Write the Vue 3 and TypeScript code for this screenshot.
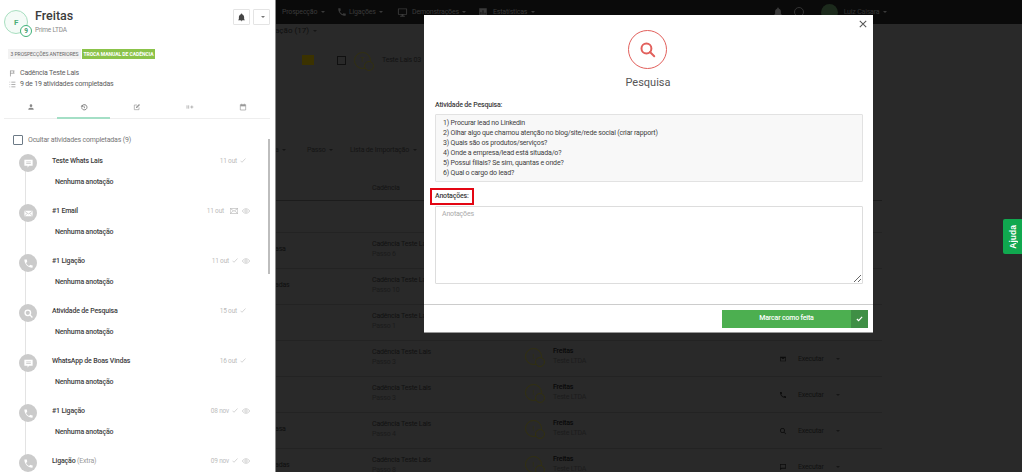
<script setup lang="ts">
type IconName = 'chat' | 'mail' | 'phone' | 'search'

interface Activity {
  title: string
  extra?: string
  date: string
  icon: IconName
  done: boolean
  mailed?: boolean
  seen?: boolean
}

const activities: Activity[] = [
  { title: 'Teste Whats Lais', date: '11 out', icon: 'chat', done: true },
  { title: '#1 Email', date: '11 out', icon: 'mail', done: false, mailed: true, seen: true },
  { title: '#1 Ligação', date: '11 out', icon: 'phone', done: true, seen: true },
  { title: 'Atividade de Pesquisa', date: '15 out', icon: 'search', done: true },
  { title: 'WhatsApp de Boas Vindas', date: '16 out', icon: 'chat', done: true },
  { title: '#1 Ligação', date: '08 nov', icon: 'phone', done: true, seen: true },
  { title: 'Ligação', extra: '(Extra)', date: '09 nov', icon: 'phone', done: true, seen: true },
]

const phonePath =
  'M6.6 10.8c1.4 2.8 3.8 5.1 6.6 6.6l2.2-2.2c.3-.3.7-.4 1-.2 1.1.4 2.3.6 3.6.6.6 0 1 .4 1 1V20c0 .6-.4 1-1 1C10.6 21 3 13.4 3 4c0-.6.4-1 1-1h3.5c.6 0 1 .4 1 1 0 1.3.2 2.5.6 3.6.1.3 0 .7-.2 1l-2.3 2.2z'

const steps = [
  '1) Procurar lead no Linkedin',
  '2) Olhar algo que chamou atenção no blog/site/rede social (criar rapport)',
  '3) Quais são os produtos/serviços?',
  '4) Onde a empresa/lead está situada/o?',
  '5) Possui filiais? Se sim, quantas e onde?',
  '6) Qual o cargo do lead?',
]

interface Row {
  frag: string
  passo: string
  lead: boolean
  action?: IconName
}

const rows: Row[] = [
  { frag: 'asa', passo: 'Passo 6', lead: false },
  { frag: 'adas', passo: 'Passo 10', lead: false },
  { frag: '', passo: 'Passo 1', lead: false },
  { frag: '', passo: 'Passo 3', lead: true, action: 'mail' },
  { frag: '', passo: 'Passo 3', lead: true, action: 'phone' },
  { frag: 'asa', passo: 'Passo 4', lead: true, action: 'search' },
  { frag: 'adas', passo: 'Passo 8', lead: true, action: 'chat' },
]
</script>

<template>
  <div class="page">
    <!-- dimmed application behind the overlays -->
    <div class="under">
      <nav class="topbar">
        <span class="nav-item first">Prospecção <i class="caret" /></span>
        <svg class="nav-icon" viewBox="0 0 24 24"><path :d="phonePath" /></svg>
        <span class="nav-item second">Ligações <i class="caret" /></span>
        <svg class="nav-icon mon" viewBox="0 0 24 24"><path d="M3 3h18a1 1 0 0 1 1 1v12a1 1 0 0 1-1 1h-7v2h3v2H7v-2h3v-2H3a1 1 0 0 1-1-1V4a1 1 0 0 1 1-1zm1 2v10h16V5z" /></svg>
        <span class="nav-item wide">Demonstrações <i class="caret" /></span>
        <svg class="nav-icon mon2" viewBox="0 0 24 24"><path d="M3 3h18v18H3zm3 9v6h2v-6zm5-4v10h2V8zm5 6v4h2v-4z" /></svg>
        <span class="nav-item">Estatísticas <i class="caret" /></span>
        <span class="nav-right">
          <svg class="nav-icon" viewBox="0 0 24 24"><path d="M12 22a2 2 0 0 0 2-2h-4a2 2 0 0 0 2 2zm7-5v-6c0-3.3-2.1-6-5-6.700V3a2 2 0 0 0-4 0v1.300C7.100 5 5 7.700 5 11v6l-2 1v1h18v-1z" /></svg>
          <span class="help-dot" />
          <span class="user-dot" />
          <span class="nav-item user">Luiz Caisara <i class="caret" /></span>
        </span>
      </nav>

      <div class="title-row">ação (17) <i class="caret dark" /></div>

      <div class="chip-row">
        <span class="yellow" />
        <span class="bg-check" />
        <span class="ring"><b>T</b><em /></span>
        <span class="chip-name">Teste Lais 03</span>
      </div>

      <div class="filter-row">
        <span class="f1">a <i class="caret dark" /></span>
        <span class="f2">Passo <i class="caret dark" /></span>
        <span>Lista de Importação <i class="caret dark" /></span>
      </div>

      <div class="head-row">Cadência</div>
      <div class="blank-row" />

      <div v-for="(r, i) in rows" :key="i" class="row">
        <span class="frag">{{ r.frag }}</span>
        <div class="cad">
          <p>Cadência Teste Lais</p>
          <small>{{ r.passo }}</small>
        </div>
        <div class="lead">
          <template v-if="r.lead">
            <span class="ring"><b>!</b><em /></span>
            <div class="lead-text">
              <p>Freitas</p>
              <small>Teste LTDA</small>
            </div>
          </template>
        </div>
        <div v-if="r.action" class="act">
          <svg class="act-icon" viewBox="0 0 24 24">
            <path v-if="r.action === 'phone'" :d="phonePath" />
            <path v-else-if="r.action === 'mail'" d="M3 5h18v14H3zm2 2.500V17h14V7.500l-7 5z" />
            <path v-else-if="r.action === 'search'" d="M10.500 3a7.500 7.500 0 0 1 5.900 12.100l5 5-1.400 1.400-5-5A7.500 7.500 0 1 1 10.500 3zm0 2.500a5 5 0 1 0 0 10 5 5 0 0 0 0-10z" />
            <path v-else d="M3 3h18v14H8l-5 4zm2 2v11l2.300-1.500H19V5z" />
          </svg>
          <span class="exec">Executar</span>
          <i class="caret dark" />
        </div>
      </div>
    </div>

    <!-- lead drawer -->
    <aside class="drawer">
      <header class="d-head">
        <div class="avatar">
          <span>F</span>
          <em>9</em>
        </div>
        <div class="who">
          <h2>Freitas</h2>
          <small>Prime LTDA</small>
        </div>
        <button class="sq bell" type="button" aria-label="Notificações">
          <svg viewBox="0 0 24 24"><path d="M12 22a2 2 0 0 0 2-2h-4a2 2 0 0 0 2 2zm7-5v-6c0-3.300-2.100-6-5-6.700V3a2 2 0 0 0-4 0v1.300C7.100 5 5 7.700 5 11v6l-2 1v1h18v-1z" /></svg>
        </button>
        <button class="sq" type="button" aria-label="Mais"><i class="caret grey" /></button>
      </header>

      <div class="tags">
        <span class="tag">3 PROSPECÇÕES ANTERIORES</span>
        <span class="tag green">TROCA MANUAL DE CADÊNCIA</span>
      </div>

      <div class="meta-line">
        <svg viewBox="0 0 12 12"><path d="M2.500 1v10M2.500 1.500h6.500l-1.500 2 1.500 2H2.500" /></svg>
        Cadência Teste Lais
      </div>
      <div class="meta-line second-line">
        <svg viewBox="0 0 12 12"><path d="M1 2h1M4 2h7M1 6h1M4 6h7M1 10h1M4 10h7" /></svg>
        9 de 19 atividades completadas
      </div>

      <div class="tabs">
        <span class="tab">
          <svg viewBox="0 0 24 24"><path class="solid" d="M12 4a4 4 0 1 1 0 8 4 4 0 0 1 0-8zM4 20v-2c0-2.700 5.300-4 8-4s8 1.300 8 4v2z" /></svg>
        </span>
        <span class="tab on">
          <svg viewBox="0 0 24 24"><path d="M8 6.500A8 8 0 1 1 5 13M12 8v5l3 2" /><path class="solid" d="M2 10l6-5v7z" /></svg>
        </span>
        <span class="tab">
          <svg viewBox="0 0 24 24"><path d="M18 13v7H4V6h8" /><path class="solid" d="M9 12l9-9 3 3-9 9-3 0z" /></svg>
        </span>
        <span class="tab">
          <svg viewBox="0 0 24 24"><path d="M3 7v10M8 7v10M13 12h9M17.500 7.500v9" /></svg>
        </span>
        <span class="tab">
          <svg viewBox="0 0 24 24"><path d="M4 5h16v16H4zM8 2v5M16 2v5" /><path class="solid" d="M4 5h16v5H4z" /></svg>
        </span>
      </div>

      <div class="scroll">
        <span class="thumb" />
        <label class="hide">
          <span class="box" />
          Ocultar atividades completadas (9)
        </label>

        <ul class="timeline">
          <li v-for="(a, i) in activities" :key="i" class="item">
            <span class="bubble">
              <svg v-if="a.icon === 'phone'" class="ic-fill" viewBox="0 0 24 24"><path :d="phonePath" /></svg>
              <svg v-else-if="a.icon === 'chat'" class="ic-fill" viewBox="0 0 24 24">
                <path d="M3 4h18v13h-8l-3 4v-4H3z" />
                <path class="bub-line" d="M7 8.500h10M7 12h10" />
              </svg>
              <svg v-else-if="a.icon === 'mail'" class="ic-fill" viewBox="0 0 24 24">
                <path d="M3 6h18v12H3z" />
                <path class="bub-line" d="M3.500 7l8.500 6 8.500-6M3.500 17.500l6-6M20.500 17.500l-6-6" />
              </svg>
              <svg v-else class="ic-stroke" viewBox="0 0 24 24"><circle cx="10.500" cy="10.500" r="6" /><path d="M15 15l5.500 5.500" /></svg>
            </span>
            <div class="item-body">
              <div class="item-top">
                <span class="item-title">{{ a.title }} <span v-if="a.extra" class="extra">{{ a.extra }}</span></span>
                <span class="item-meta" :class="{ noeye: !a.seen }">
                  <span class="date">{{ a.date }}</span>
                  <svg v-if="a.mailed" class="m-ic mailed" viewBox="0 0 14 10"><path d="M.5.500h13v9H.500zM.5.500 7 5.500 13.500.500M.5 9.500 5.500 4.500M13.500 9.500 8.500 4.500" /></svg>
                  <svg v-if="a.done" class="m-ic check" viewBox="0 0 12 10"><path d="M1 5.500 4 8.500 11 1" /></svg>
                  <svg v-if="a.seen" class="m-ic eye" viewBox="0 0 16 10"><path d="M.5 5C3 1.500 5.500.5 8 .5s5 1 7.500 4.500C13 8.500 10.500 9.500 8 9.500S3 8.500.5 5z" /><circle cx="8" cy="5" r="2.500" /></svg>
                </span>
              </div>
              <p v-if="i < activities.length - 1" class="note">Nenhuma anotação</p>
            </div>
          </li>
        </ul>
      </div>
    </aside>

    <!-- activity dialog -->
    <section class="modal">
      <button class="close" type="button" aria-label="Fechar">
        <svg viewBox="0 0 10 10"><path d="M1 1l8 8M9 1l-8 8" /></svg>
      </button>
      <div class="m-body">
        <div class="m-circle">
          <svg viewBox="0 0 24 24"><circle cx="10.500" cy="10.500" r="7" /><path d="M15.500 15.500 21.500 21.500" /></svg>
        </div>
        <h3>Pesquisa</h3>
        <p class="lbl first-lbl">Atividade de Pesquisa:</p>
        <div class="steps">
          <p v-for="s in steps" :key="s">{{ s }}</p>
        </div>
        <p class="lbl marked">Anotações:</p>
        <textarea class="notes" placeholder="Anotações" />
      </div>
      <footer class="m-foot">
        <button class="done" type="button">
          <span>Marcar como feita</span>
          <i>
            <svg viewBox="0 0 12 10"><path d="M1.500 5 4.500 8 10.500 1.500" /></svg>
          </i>
        </button>
      </footer>
    </section>

    <button class="ajuda" type="button"><span>Ajuda</span></button>
  </div>
</template>

<style scoped>
.page {
  position: relative;
  width: 1022px;
  height: 472px;
  overflow: hidden;
  background: #292929;
  font-family: Roboto, "Noto Sans", sans-serif;
  font-size: 7px;
  letter-spacing: -0.18px;
  color: #111;
}
p, h2, h3, ul { margin: 0; padding: 0; }
small { font-size: inherit; }
i, em { font-style: normal; }

.caret {
  display: inline-block;
  width: 0;
  height: 0;
  margin-left: 2px;
  vertical-align: 1px;
  border-left: 2px solid transparent;
  border-right: 2px solid transparent;
  border-top: 2px solid #3a3a3a;
}
.caret.dark { border-top-color: #161616; }
.caret.grey { border-top-color: #777; }

/* background app */
.under { width: 882px; height: 472px; }
.topbar {
  display: flex;
  align-items: center;
  width: 1022px;
  height: 24px;
  background: #0a0a0a;
  color: #3a3a3a;
}
.nav-item { white-space: nowrap; }
.nav-item.first { margin-left: 282px; width: 55px; }
.nav-item.second { width: 48px; }
.nav-item.wide { width: 66px; }
.nav-icon { width: 10px; height: 10px; fill: #3a3a3a; flex: none; margin: 0 2px 0 0; }
.nav-icon.mon { width: 11px; height: 11px; margin-right: 4px; }
.nav-icon.mon2 { margin: 0 5px 0 0; }
.nav-right { display: flex; align-items: center; margin-left: auto; padding-right: 135px; }
.help-dot {
  width: 8px; height: 8px; border-radius: 50%;
  border: 1px solid #333; margin: 0 17px 0 9px;
}
.user-dot { width: 17px; height: 17px; border-radius: 50%; background: #1c2a1c; margin-right: 6px; }
.user { color: #333; }

.title-row {
  height: 14px;
  padding: 0 0 0 275px;
  line-height: 14px;
  font-size: 8px;
  letter-spacing: 0;
  color: #0f0f0f;
}
.chip-row {
  display: flex;
  align-items: center;
  height: 22px;
  margin-top: 11px;
  padding-left: 302px;
  color: #121212;
}
.yellow { width: 12px; height: 10px; background: #3b3200; margin-right: 23px; }
.bg-check { width: 9px; height: 9px; border: 1px solid #101010; margin-right: 8px; box-sizing: border-box; }
.ring {
  position: relative;
  display: inline-flex;
  align-items: center;
  justify-content: center;
  flex: none;
  width: 17px;
  height: 17px;
  box-sizing: border-box;
  border: 1px solid #323010;
  border-radius: 50%;
  color: #323010;
}
.ring b { font-weight: 400; }
.ring em {
  position: absolute;
  right: -4px;
  bottom: -3px;
  width: 8px;
  height: 8px;
  border: 1px solid #323010;
  border-radius: 50%;
  background: #292929;
}
.chip-name { margin-left: 11px; }
.filter-row {
  display: flex;
  height: 14px;
  margin-top: 72px;
  padding-left: 275px;
  line-height: 14px;
  color: #141414;
}
.f1 { width: 32px; }
.f2 { width: 43px; }
.head-row {
  height: 14px;
  margin-top: 24px;
  padding: 0 0 0 372px;
  line-height: 14px;
  color: #141414;
}
.blank-row {
  height: 32px;
  margin-top: 5px;
  border-top: 1px solid #1c1c1c;
  box-sizing: border-box;
}
.row {
  display: grid;
  grid-template-columns: 275px 97px 153px 248px 1fr;
  align-items: center;
  height: 36px;
  box-sizing: border-box;
  border-top: 1px solid #232323;
}
.frag { grid-column: 2; margin-top: -3px; color: #0e0e0e; }
.cad { grid-column: 3; color: #111; line-height: 10px; margin-top: -3px; }
.cad small { color: #1b1b1b; }
.lead { grid-column: 4; display: flex; align-items: center; margin-top: -4px; }
.lead-text { margin-left: 11px; line-height: 9.500px; }
.lead-text p { color: #080808; font-weight: 500; }
.lead-text small { color: #1c1c1c; }
.act { grid-column: 5; display: flex; align-items: center; margin-left: 6px; color: #111; }
.act-icon { width: 8px; height: 8px; fill: #0c0c0c; margin-right: 11px; }
.exec { width: 30px; margin-right: 6px; }

/* drawer */
.drawer {
  position: absolute;
  top: 0;
  left: 0;
  width: 275px;
  height: 472px;
  overflow: hidden;
  background: #fff;
  color: #444;
  box-shadow: 1px 0 0 #8a8a8a;
}
.d-head {
  display: flex;
  align-items: flex-start;
  height: 44px;
  padding: 9px 5px 0 4px;
  box-sizing: border-box;
}
.avatar {
  position: relative;
  display: flex;
  align-items: center;
  justify-content: center;
  flex: none;
  width: 24px;
  height: 24px;
  margin-top: 1px;
  border: 1px solid #a8dfc0;
  border-radius: 50%;
  box-sizing: border-box;
  background: #f4fbf7;
  color: #4aae76;
  font-size: 8px;
  font-weight: 700;
}
.avatar em {
  position: absolute;
  left: 15px;
  top: 14px;
  width: 12px;
  height: 12px;
  border: 1px solid #3fb27a;
  border-radius: 50%;
  box-sizing: border-box;
  background: #fff;
  color: #3c9a68;
  font-size: 6.500px;
  line-height: 10px;
  text-align: center;
}
.who { flex: 1; margin: -1px 0 0 7px; }
.who h2 { font-size: 12.500px; font-weight: 500; line-height: 16px; letter-spacing: 0; color: #3c3c3c; }
.who small { display: block; margin-top: 2px; font-size: 6.500px; line-height: 9px; color: #8a8a8a; }
.sq {
  display: flex;
  align-items: center;
  justify-content: center;
  width: 17px;
  height: 16px;
  margin: 0 0 0 3px;
  padding: 0;
  background: #fff;
  border: 1px solid #e4e4e4;
  border-radius: 1px;
}
.sq svg { width: 9px; height: 9px; fill: #444; }
.tags { display: flex; gap: 1px; height: 10px; margin: 5px 0 0 8px; }
.tag {
  display: block;
  width: 73px;
  height: 10px;
  background: #f2f2f2;
  color: #666;
  font-size: 5px;
  letter-spacing: -0.05px;
  line-height: 10px;
  text-align: center;
  white-space: nowrap;
  overflow: hidden;
}
.tag.green { background: #8bc34a; color: #fff; font-weight: 700; }
.meta-line {
  display: flex;
  align-items: center;
  gap: 4px;
  height: 11px;
  margin: 9px 0 0 9px;
  color: #5c5c5c;
  font-size: 7px;
  line-height: 11px;
}
.meta-line.second-line { margin-top: 0; }
.meta-line svg { width: 7px; height: 7px; fill: none; stroke: #777; stroke-width: 1; }
.tabs {
  display: grid;
  grid-template-columns: repeat(5, 53.200px);
  height: 18px;
  margin: 11px 0 0 4px;
}
.tab {
  display: flex;
  justify-content: center;
  padding-top: 2px;
  height: 18px;
  box-sizing: border-box;
  border-bottom: 1px solid #eee;
}
.tab.on { border-bottom: 2px solid #a4dfc6; }
.tab svg { width: 8px; height: 8px; fill: none; stroke: #999; stroke-width: 2; }
.tab .solid { fill: #999; stroke: none; }
.tab:first-child .solid { fill: #888; }
.tab.on svg { stroke: #555; }
.tab.on .solid { fill: #555; }
.scroll { position: relative; height: 354px; }
.thumb {
  position: absolute;
  top: 5px;
  left: 268px;
  width: 2px;
  height: 135px;
  background: #bdbdbd;
}
.hide {
  display: flex;
  align-items: center;
  height: 11px;
  margin: 15px 0 0 13px;
  color: #777;
}
.box {
  display: block;
  width: 10px;
  height: 10px;
  box-sizing: border-box;
  margin-right: 5px;
  border: 1px solid #6c7a86;
  border-radius: 1px;
}
.timeline { list-style: none; margin-top: 7px; }
.item {
  position: relative;
  display: flex;
  height: 50px;
  padding: 2px 0 0 19px;
  box-sizing: border-box;
}
.item::before {
  content: "";
  position: absolute;
  left: 25px;
  top: 11px;
  width: 1px;
  height: 50px;
  background: #e3e3e3;
}
.item:last-child::before { display: none; }
.bubble {
  position: relative;
  display: flex;
  align-items: center;
  justify-content: center;
  flex: none;
  width: 18px;
  height: 18px;
  border-radius: 50%;
  background: #cbcbcb;
}
.ic-fill { width: 11px; height: 11px; fill: #fff; }
.bub-line { fill: none; stroke: #cbcbcb; stroke-width: 1.800; }
.ic-stroke { width: 11px; height: 11px; fill: none; stroke: #fff; stroke-width: 3; }
.item-body { flex: 1; padding: 1px 0 0 15px; min-width: 0; }
.item-top { display: flex; align-items: center; justify-content: space-between; height: 11px; width: 198px; }
.item-title { color: #3d3d3d; font-weight: 500; white-space: nowrap; }
.extra { color: #999; font-weight: 400; }
.item-meta { display: flex; align-items: center; gap: 3px; color: #bbb; font-size: 6.500px; }
.item-meta.noeye { padding-right: 4px; }
.m-ic { fill: none; stroke: #aaa; stroke-width: 1; }
.mailed { width: 8px; height: 6px; margin-left: 3px; }
.check { width: 6px; height: 5px; }
.eye { width: 8px; height: 6px; margin-left: 1px; }
.note { margin: 11px 0 0 3px; color: #444; line-height: 11px; font-weight: 500; }

/* modal */
.modal {
  position: absolute;
  top: 15px;
  left: 424px;
  display: flex;
  flex-direction: column;
  width: 449px;
  height: 318px;
  box-sizing: border-box;
  background: #fff;
  border-bottom: 1px solid #999;
}
.close {
  position: absolute;
  top: 5px;
  right: 6px;
  width: 8px;
  height: 8px;
  padding: 0;
  border: 0;
  background: none;
}
.close svg { display: block; width: 8px; height: 8px; fill: none; stroke: #555; stroke-width: 1.300; }
.m-body { flex: 1; padding: 15px 10px 0 11px; box-sizing: border-box; }
.m-circle {
  display: flex;
  align-items: center;
  justify-content: center;
  width: 39px;
  height: 39px;
  margin: 0 0 0 193px;
  border: 1.500px solid #e2605c;
  border-radius: 50%;
  box-sizing: border-box;
}
.m-circle svg { width: 17px; height: 17px; fill: none; stroke: #e2605c; stroke-width: 2.800; stroke-linecap: round; }
.m-body h3 {
  height: 18px;
  margin-top: 5px;
  padding-right: 2px;
  font-size: 11px;
  font-weight: 400;
  letter-spacing: 0;
  line-height: 18px;
  text-align: center;
  color: #555;
}
.lbl { color: #3c3c3c; font-weight: 500; line-height: 10px; }
.first-lbl { margin-top: 8px; }
.steps {
  height: 68px;
  margin-top: 4px;
  padding: 3px 0 0 7px;
  box-sizing: border-box;
  border: 1px solid #e2e2e2;
  border-radius: 1px;
  background: #f8f8f8;
  color: #3e3e3e;
  line-height: 10px;
}
.marked {
  display: block;
  width: 44px;
  height: 17px;
  margin: 6px 0 1px -5px;
  padding: 0 0 0 3px;
  box-sizing: border-box;
  border: 2px solid #e30613;
  line-height: 13px;
  white-space: nowrap;
}
.notes {
  display: block;
  width: 100%;
  height: 78px;
  padding: 3px 6px;
  box-sizing: border-box;
  border: 1px solid #ddd;
  border-radius: 1px;
  background: #fff;
  font: inherit;
  letter-spacing: inherit;
  color: #444;
  outline: none;
}
.notes::placeholder { color: #aaa; }
.m-foot {
  display: flex;
  justify-content: flex-end;
  flex: none;
  height: 28px;
  padding: 5px 5px 0 0;
  box-sizing: border-box;
  border-top: 1px solid #ccc;
}
.done {
  display: flex;
  width: 146px;
  height: 18px;
  padding: 0;
  border: 0;
  background: #4caf50;
  color: #fff;
  font: inherit;
  letter-spacing: inherit;
  font-weight: 500;
}
.done span { flex: 1; line-height: 17px; text-align: center; }
.done i {
  display: flex;
  align-items: center;
  justify-content: center;
  width: 17px;
  height: 18px;
  background: #3f8f45;
}
.done svg { width: 7px; height: 6px; fill: none; stroke: #fff; stroke-width: 2; }

.ajuda {
  position: absolute;
  top: 219px;
  left: 1003px;
  display: flex;
  align-items: center;
  justify-content: center;
  width: 19px;
  height: 35px;
  padding: 0;
  border: 0;
  border-radius: 2px 0 0 2px;
  background: #10a84f;
  color: #fff;
  font: 700 8.500px "Liberation Sans", sans-serif;
}
.ajuda span { writing-mode: vertical-rl; transform: rotate(180deg); }
</style>

<style>
html, body { margin: 0; background: #292929; }
</style>
